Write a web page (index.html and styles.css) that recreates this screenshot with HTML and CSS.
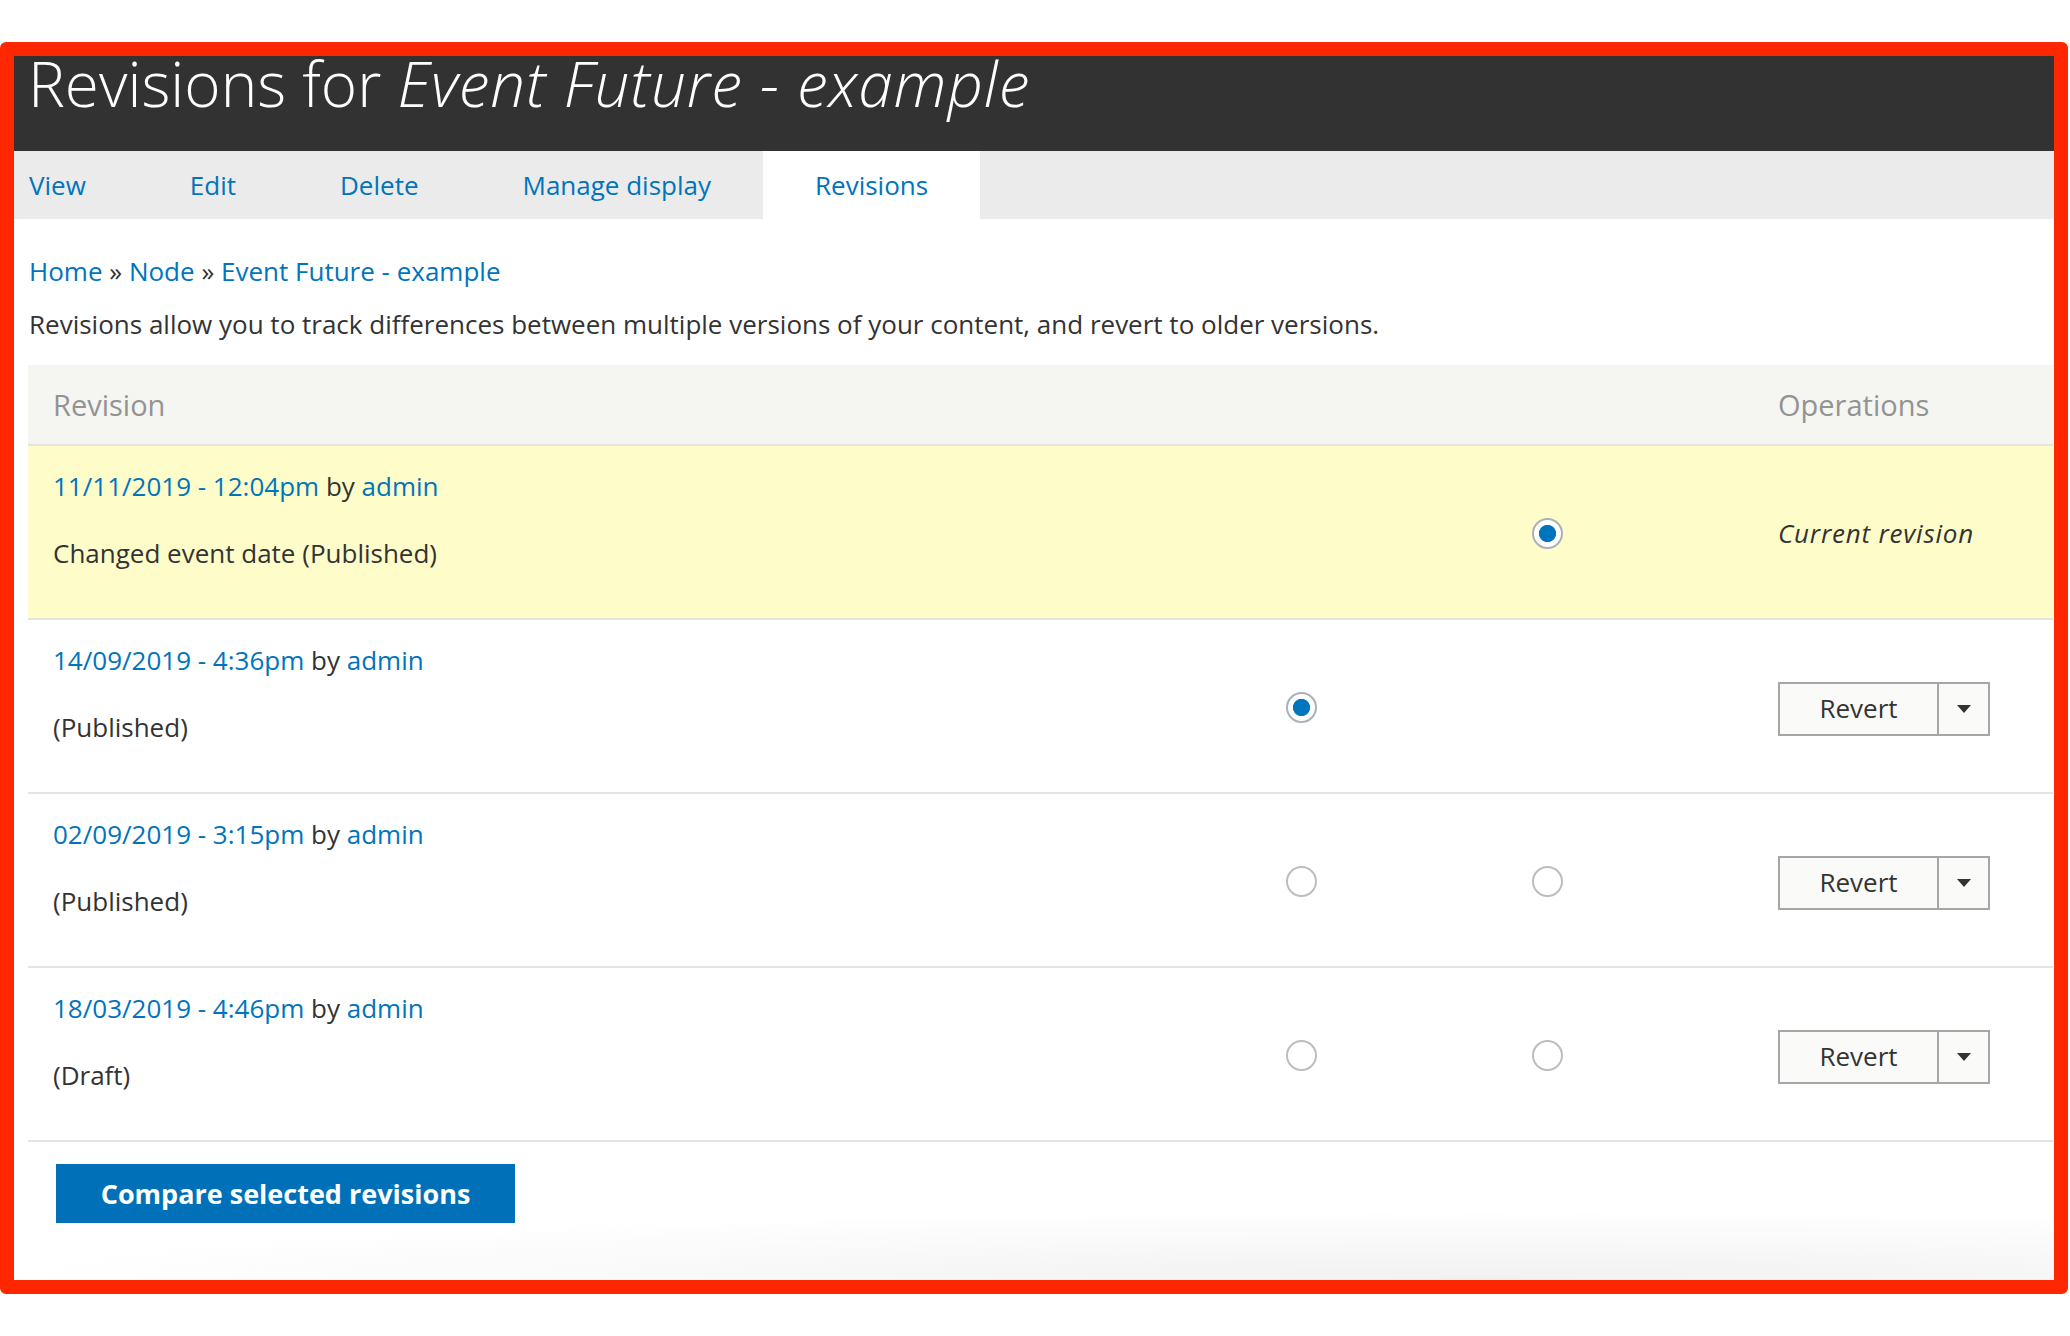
FILE: index.html
```html
<!DOCTYPE html>
<html lang="en">
<head>
<meta charset="utf-8">
<title>Revisions for Event Future - example</title>
<link rel="stylesheet" href="styles.css">
</head>
<body>
<div class="frame">
  <header class="page-header">
    <h1 class="page-title">Revisions for <em>Event Future - example</em></h1>
  </header>
  <nav class="tabs">
    <a class="tab" href="#">View</a>
    <a class="tab" href="#">Edit</a>
    <a class="tab" href="#">Delete</a>
    <a class="tab" href="#">Manage display</a>
    <a class="tab is-active" href="#">Revisions</a>
  </nav>
  <main class="content">
    <div class="breadcrumb"><a href="#">Home</a> » <a href="#">Node</a> » <a href="#">Event Future - example</a></div>
    <p class="intro">Revisions allow you to track differences between multiple versions of your content, and revert to older versions.</p>
    <table class="revisions">
      <colgroup>
        <col class="col-rev"><col class="col-radio"><col class="col-radio"><col class="col-ops">
      </colgroup>
      <thead>
        <tr><th>Revision</th><th></th><th></th><th>Operations</th></tr>
      </thead>
      <tbody>
        <tr class="current">
          <td><div class="rev-line"><a href="#">11/11/2019 - 12:04pm</a> by <a href="#">admin</a></div><p class="rev-log">Changed event date (Published)</p></td>
          <td></td>
          <td><input type="radio" class="radio" name="right" checked></td>
          <td><em class="current-label">Current revision</em></td>
        </tr>
        <tr>
          <td><div class="rev-line"><a href="#">14/09/2019 - 4:36pm</a> by <a href="#">admin</a></div><p class="rev-log">(Published)</p></td>
          <td><input type="radio" class="radio" name="left" checked></td>
          <td></td>
          <td><div class="dropbutton"><span class="drop-main">Revert</span><span class="drop-toggle"><span class="arrow"></span></span></div></td>
        </tr>
        <tr>
          <td><div class="rev-line"><a href="#">02/09/2019 - 3:15pm</a> by <a href="#">admin</a></div><p class="rev-log">(Published)</p></td>
          <td><input type="radio" class="radio" name="left"></td>
          <td><input type="radio" class="radio" name="right"></td>
          <td><div class="dropbutton"><span class="drop-main">Revert</span><span class="drop-toggle"><span class="arrow"></span></span></div></td>
        </tr>
        <tr>
          <td><div class="rev-line"><a href="#">18/03/2019 - 4:46pm</a> by <a href="#">admin</a></div><p class="rev-log">(Draft)</p></td>
          <td><input type="radio" class="radio" name="left"></td>
          <td><input type="radio" class="radio" name="right"></td>
          <td><div class="dropbutton"><span class="drop-main">Revert</span><span class="drop-toggle"><span class="arrow"></span></span></div></td>
        </tr>
      </tbody>
    </table>
    <div class="actions"><button class="btn-primary" type="button">Compare selected revisions</button></div>
  </main>
</div>
</body>
</html>
```

FILE: styles.css
```css
html, body {
  margin: 0;
  padding: 0;
  background: #ffffff;
}
body {
  font-family: "Open Sans", "Noto Sans", sans-serif;
  font-size: 26px;
  color: #333333;
  width: 2070px;
  height: 1336px;
  overflow: hidden;
}
a {
  color: #0074bd;
  text-decoration: none;
}
.frame {
  margin-top: 42px;
  width: 2068px;
  height: 1252px;
  box-sizing: border-box;
  border: 14px solid #ff2700;
  border-radius: 6px;
  display: flex;
  flex-direction: column;
  background:
    radial-gradient(ellipse 1500px 70px at 72% 100%, #f1f1f1 0%, rgba(255,255,255,0) 100%) no-repeat,
    #ffffff;
}
.page-header {
  background: #323232;
  height: 95px;
  padding-left: 14px;
  flex: none;
}
.page-title {
  margin: 0;
  font-size: 62px;
  font-weight: 300;
  line-height: 54px;
  color: #ffffff;
  white-space: nowrap;
}
.page-title em {
  font-style: italic;
  font-weight: 300;
  letter-spacing: 0.9px;
}
.tabs {
  display: flex;
  background: #ebebeb;
  height: 68px;
  padding-left: 15px;
  flex: none;
}
.tab {
  display: block;
  padding: 0 52px;
  line-height: 68px;
  font-size: 26px;
  color: #0074bd;
}
.tab:first-child {
  padding-left: 0;
}
.tab.is-active {
  background: #ffffff;
}
.content {
  padding-left: 14px;
  flex: 1;
}
.breadcrumb {
  margin-top: 33px;
  line-height: 39px;
  padding-left: 1px;
}
.intro {
  margin: 14px 0 0;
  line-height: 39px;
  padding-left: 1px;
}
.revisions {
  margin-top: 21px;
  width: 2025px;
  border-collapse: collapse;
  table-layout: fixed;
}
.col-rev { width: 1233px; }
.col-radio { width: 246px; }
.col-ops { width: 300px; }
.revisions th {
  background: #f5f5f2;
  color: #939393;
  font-weight: 400;
  font-size: 29px;
  text-align: left;
  height: 80px;
  padding: 0 25px;
  border-bottom: 2px solid #e6e4df;
  box-sizing: border-box;
}
.revisions td {
  padding: 21px 25px 19px;
  border-bottom: 2px solid #e6e4df;
  vertical-align: middle;
  line-height: 39px;
}
.revisions td:first-child {
  vertical-align: top;
}
.revisions tr.current td {
  background: #fefdc9;
}
.rev-line {
  color: #333333;
}
.rev-log {
  margin: 28px 0 26px;
  color: #333333;
}
.radio {
  -webkit-appearance: none;
  appearance: none;
  margin: 0;
  width: 31px;
  height: 31px;
  border-radius: 50%;
  border: 2px solid #bdbdbd;
  background: #ffffff;
  box-sizing: border-box;
  display: block;
}
.radio:checked {
  border-color: #a9b1b9;
  background: radial-gradient(circle, #0074bd 0, #0074bd 8.2px, #ffffff 9px);
}
.current-label {
  font-style: italic;
  color: #333333;
  letter-spacing: 0.8px;
}
.dropbutton {
  display: inline-flex;
  height: 54px;
  box-sizing: border-box;
  border: 2px solid #a6a6a6;
  background: #fafaf8;
  vertical-align: middle;
  margin-top: 3px;
}
.drop-main {
  width: 157px;
  display: flex;
  align-items: center;
  justify-content: center;
  color: #333333;
  border-right: 2px solid #a6a6a6;
}
.drop-toggle {
  width: 49px;
  display: flex;
  align-items: center;
  justify-content: center;
}
.arrow {
  width: 0;
  height: 0;
  border-left: 7.5px solid transparent;
  border-right: 7.5px solid transparent;
  border-top: 8px solid #333333;
}
.actions {
  margin-top: 22px;
  padding-left: 28px;
}
.btn-primary {
  font-family: "Open Sans", "Noto Sans", sans-serif;
  font-size: 27px;
  font-weight: 700;
  color: #ffffff;
  background: #0071b8;
  border: 0;
  border-radius: 0;
  width: 459px;
  height: 59px;
  padding: 0;
}
```
